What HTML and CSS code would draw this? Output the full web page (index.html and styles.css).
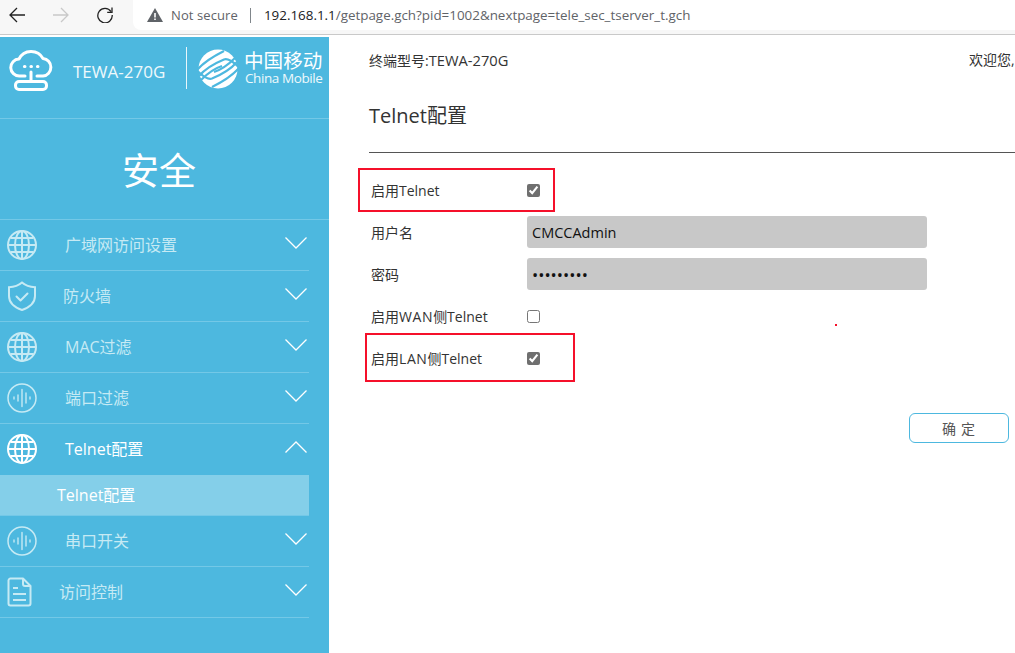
FILE: index.html
```html
<!DOCTYPE html>
<html lang="zh-CN">
<head>
<meta charset="utf-8">
<title>Telnet配置</title>
<link rel="stylesheet" href="styles.css">
</head>
<body>
<header class="toolbar">
  <svg class="nav-icon" viewBox="0 0 16 16"><path d="M16 8H1M8 1L1 8l7 7" fill="none" stroke="#222" stroke-width="1.3"/></svg>
  <svg class="nav-icon" viewBox="0 0 16 16"><path d="M0 8h15M8 1l7 7-7 7" fill="none" stroke="#c9c9c9" stroke-width="1.3"/></svg>
  <svg class="nav-icon" viewBox="0 0 16 16"><path d="M14 4.6A7.2 7.2 0 1 0 15.2 8" fill="none" stroke="#222" stroke-width="1.3"/><path d="M15 .5v4.8h-4.8" fill="none" stroke="#222" stroke-width="1.3"/></svg>
  <div class="address">
    <svg class="warn" viewBox="0 0 16 14"><path d="M8 0l8 14H0z" fill="#5f6368"/><path d="M7.2 5h1.6v4.6H7.2zM7.2 10.5h1.6v1.6H7.2z" fill="#fff"/></svg>
    <span class="not-secure">Not secure</span>
    <span class="addr-sep"></span>
    <span class="url"><span class="host">192.168.1.1</span>/getpage.gch?pid=1002&amp;nextpage=tele_sec_tserver_t.gch</span>
  </div>
</header>
<div class="page">
  <aside class="sidebar">
    <div class="brand">
      <svg class="cloud" viewBox="0 0 48 46" fill="none" stroke="#fff" stroke-width="3" stroke-linejoin="round" stroke-linecap="round">
        <path d="M17 29H11.500a8.500 8.500 0 0 1-.5-17A13.500 13.500 0 0 1 35 11.500a8.800 8.800 0 0 1 0 17.500H29"/>
        <path d="M23 25v9"/>
        <rect x="7.500" y="34.500" width="31" height="8" rx="3.500"/>
        <path d="M16.500 19.500h.4M23 19.500h.4M29.500 19.500h.4" stroke-width="3.200"/>
      </svg>
      <span class="model">TEWA-270G</span>
      <span class="brand-sep"></span>
      <svg class="cm-logo" viewBox="0 0 40 40" fill="none">
        <circle cx="20" cy="20" r="19.500" fill="#fff"/>
        <g id="cm-half" stroke="#4db8df" stroke-width="2.200">
          <path d="M-1 21C6 13 14 8 26 2"/>
          <path d="M1 27C8 19 15 15 26 10.500c4-1.500 9 2 15 8"/>
          <path d="M3 31C10 24 16 19.500 24 17"/>
        </g>
        <use href="#cm-half" transform="rotate(180 20 20)"/>
      </svg>
      <div class="cm-text">
        <span class="cm-cn">中国移动</span>
        <span class="cm-en">China Mobile</span>
      </div>
    </div>
    <div class="section-title">安全</div>
    <nav class="menu">
      <a class="item">
        <svg class="ico" viewBox="0 0 30 30"><use href="#globe"/></svg>
        <span class="label l-a">广域网访问设置</span>
        <svg class="chev" viewBox="0 0 22 12"><path d="M.5.5L11 11 21.500.5"/></svg>
      </a>
      <a class="item">
        <svg class="ico" viewBox="0 0 30 30"><use href="#shield"/></svg>
        <span class="label l-b">防火墙</span>
        <svg class="chev" viewBox="0 0 22 12"><path d="M.5.5L11 11 21.500.5"/></svg>
      </a>
      <a class="item">
        <svg class="ico" viewBox="0 0 30 30"><use href="#globe"/></svg>
        <span class="label l-a">MAC过滤</span>
        <svg class="chev" viewBox="0 0 22 12"><path d="M.5.5L11 11 21.500.5"/></svg>
      </a>
      <a class="item">
        <svg class="ico" viewBox="0 0 30 30"><use href="#wave"/></svg>
        <span class="label l-a">端口过滤</span>
        <svg class="chev" viewBox="0 0 22 12"><path d="M.5.5L11 11 21.500.5"/></svg>
      </a>
      <a class="item open">
        <svg class="ico" viewBox="0 0 30 30"><use href="#globe"/></svg>
        <span class="label l-a">Telnet配置</span>
        <svg class="chev" viewBox="0 0 22 12"><path d="M.5 11.500L11 1l10.500 10.500"/></svg>
      </a>
      <a class="sub">Telnet配置</a>
      <a class="item">
        <svg class="ico" viewBox="0 0 30 30"><use href="#wave"/></svg>
        <span class="label l-a">串口开关</span>
        <svg class="chev" viewBox="0 0 22 12"><path d="M.5.5L11 11 21.500.5"/></svg>
      </a>
      <a class="item">
        <svg class="ico" viewBox="0 0 30 30"><use href="#doc"/></svg>
        <span class="label l-c">访问控制</span>
        <svg class="chev" viewBox="0 0 22 12"><path d="M.5.5L11 11 21.500.5"/></svg>
      </a>
    </nav>
  </aside>
  <main class="content">
    <div class="topline">
      <span>终端型号:<span class="top-model">TEWA-270G</span></span>
      <span class="welcome">欢迎您,</span>
    </div>
    <h1 class="title">Telnet配置</h1>
    <form class="form">
      <div class="row check-row first"><label class="lab">启用Telnet</label><input class="cb" type="checkbox" checked></div>
      <div class="row"><label class="lab">用户名</label><input class="field" type="text" value="CMCCAdmin"></div>
      <div class="row"><label class="lab">密码</label><input class="field pass" type="password" value="CMCCAdmi9"></div>
      <div class="row check-row"><label class="lab">启用<span class="wide">WAN</span>侧Telnet</label><input class="cb" type="checkbox"></div>
      <div class="row check-row"><label class="lab">启用<span class="wide">LAN</span>侧Telnet</label><input class="cb" type="checkbox" checked></div>
      <div class="actions"><button class="ok" type="button">确 定</button></div>
    </form>
    <span class="mark mark-one"></span>
    <span class="mark mark-two"></span>
    <span class="dot"></span>
  </main>
</div>
<svg class="defs" width="0" height="0">
  <defs>
    <g id="globe" fill="none" stroke="currentColor" stroke-width="2">
      <circle cx="15" cy="15" r="14"/>
      <ellipse cx="15" cy="15" rx="7" ry="14"/>
      <path d="M15 1v28M1 15h28M3.500 8h23M3.500 22h23"/>
    </g>
    <g id="shield" fill="none" stroke="currentColor" stroke-width="2">
      <path d="M15 1.500C11 5 6 6 2 6.200V15c0 7 6 11.500 13 14 7-2.500 13-7 13-14V6.200C24 6 19 5 15 1.500z"/>
      <path d="M9.500 15.500l4 4 7-7" stroke-linecap="round" stroke-linejoin="round"/>
    </g>
    <g id="wave" fill="none" stroke="currentColor" stroke-width="1.500" stroke-linecap="round">
      <circle cx="15" cy="15" r="14"/>
      <path d="M7 14v2M11 12v6M15 6.500v17M19 10v10M23 14v2" stroke-width="1.400"/>
    </g>
    <g id="doc" fill="none" stroke="currentColor" stroke-width="2" stroke-linejoin="round">
      <path d="M3.500 1.500H16l7.500 7.500v17.500a2 2 0 0 1-2 2h-18a2 2 0 0 1-2-2v-23a2 2 0 0 1 2-2z"/>
      <path d="M16 1.500V7a2 2 0 0 0 2 2h5.500M6 11h5M6 17h13M6 23h13"/>
    </g>
  </defs>
</svg>
</body>
</html>
```

FILE: styles.css
```css
* { box-sizing: border-box; }
html, body { margin: 0; height: 100%; }
body {
  width: 1015px;
  height: 653px;
  overflow: hidden;
  background: #fff;
  font-family: "Open Sans", "Noto Sans CJK SC", sans-serif;
  display: flex;
  flex-direction: column;
}
.defs { position: absolute; }

.toolbar {
  height: 37px;
  flex: none;
  display: flex;
  align-items: flex-start;
  background: #f7f7f7;
  box-shadow: inset 0 -1px 0 #c9c9c9;
  border-bottom: 2px solid #fff;
  padding-left: 9px;
}
.nav-icon { width: 16px; height: 16px; margin: 7px 28px 0 0; flex: none; }
.address {
  margin-left: -8px;
  height: 30px;
  flex: 1;
  background: #fff;
  border-radius: 0 0 0 8px;
  display: flex;
  align-items: center;
  padding: 0 0 0 14px;
  font-size: 13px;
}
.warn { width: 16px; height: 14px; flex: none; }
.not-secure { margin-left: 8px; color: #5f6368; letter-spacing: .1px; }
.addr-sep { width: 1px; height: 15px; background: #80868b; margin: 0 13px 0 12px; }
.url { color: #5f6368; font-size: 13.400px; white-space: nowrap; }
.host { color: #202124; }

.page { flex: 1; display: flex; min-height: 0; }
.sidebar { width: 329px; flex: none; background: #4db8df; }
.brand {
  height: 82px;
  border-bottom: 1px solid #73c8e7;
  display: flex;
  align-items: flex-start;
  padding: 10px 0 0 8px;
  color: #fff;
}
.cloud { width: 48px; height: 46px; flex: none; }
.model { margin: 13px 0 0 17px; font-size: 17px; width: 113px; color: #eef9fc; white-space: nowrap; }
.brand-sep { width: 1px; height: 42px; background: #e8f6fb; flex: none; }
.cm-logo { width: 40px; height: 40px; margin: 2px 0 0 11px; flex: none; }
.cm-text { margin: 3px 0 0 7px; display: flex; flex-direction: column; }
.cm-cn { font-size: 19.600px; line-height: 21px; white-space: nowrap; margin-left: -1px; }
.cm-en { font-size: 13.500px; line-height: 15px; letter-spacing: -.42px; white-space: nowrap; color: #eef9fc; }
.section-title {
  height: 101px;
  border-bottom: 1px solid #73c8e7;
  color: #fff;
  font-size: 37px;
  line-height: 104px;
  text-align: center;
  padding-right: 11px;
}
.menu { width: 309px; }
.item {
  height: 51px;
  display: flex;
  align-items: center;
  border-bottom: 1px solid #73c8e7;
  color: #c6eaf4;
  padding-left: 7px;
  font-size: 16px;
}
.item.open { color: #fff; border-bottom: 0; padding-bottom: 1px; }
.ico { width: 30px; height: 30px; flex: none; }
.label { white-space: nowrap; margin-top: -2px; }
.l-a { margin-left: 28px; }
.l-b { margin-left: 26px; }
.l-c { margin-left: 22px; }
.chev {
  width: 22px;
  height: 12px;
  margin-left: auto;
  margin-right: 2px;
  margin-top: -4px;
  flex: none;
  fill: none;
  stroke: #fff;
  stroke-width: 1.300;
}
.sub {
  display: block;
  height: 41px;
  padding-left: 57px;
  line-height: 40px;
  background: #84cfe9;
  border-bottom: 1px solid #73c8e7;
  color: #fff;
  font-size: 16px;
}

.content {
  flex: 1;
  min-width: 0;
  position: relative;
  padding: 0 0 0 40px;
  color: #333;
  font-size: 14px;
}
.topline {
  display: flex;
  justify-content: space-between;
  height: 46px;
  padding-top: 12px;
  line-height: 22px;
  white-space: nowrap;
}
.top-model { font-size: 14.700px; }
.welcome { width: 46px; overflow: hidden; }
.title {
  margin: 0;
  height: 70px;
  padding: 20px 0 0 0;
  border-bottom: 1px solid #555;
  font-size: 20px;
  font-weight: 400;
  line-height: 26px;
}
.row {
  display: flex;
  align-items: center;
  height: 42px;
  padding-left: 2px;
}
.first { margin-top: 16px; }
.lab { width: 156px; flex: none; white-space: nowrap; }
.wide { letter-spacing: .6px; }
.cb { margin: 0; width: 13px; height: 13px; accent-color: #6f6f6f; flex: none; }
.field {
  width: 400px;
  height: 32px;
  border: 0;
  border-radius: 3px;
  background: #c8c8c8;
  padding: 0 5px;
  color: #111;
  font: 14.500px "Open Sans", sans-serif;
}
.pass { font-size: 16.500px; }
.actions { display: flex; justify-content: flex-end; padding: 34px 6px 0 0; }
.ok {
  width: 100px;
  height: 30px;
  background: #fff;
  border: 1px solid #4db8df;
  border-radius: 6px;
  color: #555;
  font: 14px "Noto Sans CJK SC", sans-serif;
  letter-spacing: 1px;
  padding: 0;
}
.mark { position: absolute; border: 2px solid #f5102a; pointer-events: none; }
.mark-one { left: 29px; top: 131px; width: 197px; height: 44px; }
.mark-two { left: 36px; top: 296px; width: 210px; height: 49px; }
.dot { position: absolute; left: 506px; top: 287px; width: 2px; height: 2px; background: #f5102a; }
```
